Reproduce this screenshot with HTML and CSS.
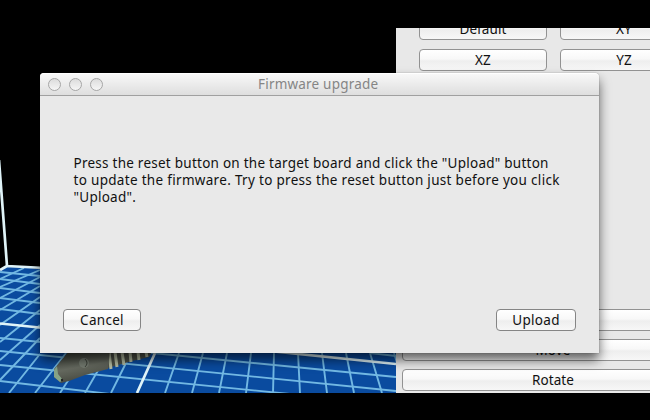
FILE: index.html
```html
<!DOCTYPE html>
<html lang="en">
<head>
<meta charset="utf-8">
<title>Firmware upgrade</title>
<link rel="stylesheet" href="styles.css">
</head>
<body>
<main class="app">
  <svg class="scene" viewBox="0 0 396 365" width="396" height="365" aria-hidden="true">
    <defs>
      <linearGradient id="skin" x1="0" y1="0" x2="0.3" y2="1">
        <stop offset="0" stop-color="#34382f"/><stop offset=".6" stop-color="#666a60"/><stop offset="1" stop-color="#45483f"/>
      </linearGradient>
    </defs>
    <g transform="translate(0 -28)">
      <path fill="#0a4b9f" d="M0 270L7 266L396 300V393H0Z"/>
      <g class="grid">
        <path d="M0 272L40 276M0 279L40 284M0 288L40 293M0 298L40 303M0 309L40 314M0 338L396 377M0 351L396 391M0 365L300 395M0 381L110 394M370 353L396 356"/>
        <path d="M24 268L0 279M40 270L0 287M40 277L0 298M40 286L0 310M40 297L0 325M40 310L0 342M40 325L0 360M40 338L0 380M40 354L9 393M66 353L35 393M86 353L60 393M108 353L85 393M131 353L111 393M179 353L165 393M203 353L192 393M227 353L219 393M251 353L246 393M274 353L273 393M298 353L300 393M322 353L327 393M346 353L354 393M370 353L382 393M394 353L398 366"/>
      </g>
      <path class="edge" d="M-1 160L7 266L45 268M7 266L0 270M0 323.500L396 364M155 353L137 393"/>
      <path fill="#4c5047" d="M106 350H153L149 357L132 361L108 368Z"/>
      <path class="stripe" d="M109 352L111 369M115 352L117 367M122 352L124 365M130 352L131 362M138 352L139 360M146 352L147 357"/>
      <path fill="url(#skin)" d="M70 350L59 363L54 369L54 377L61 383L69 381L85 375L108 369L110 350Z"/>
      <path fill="#87a386" d="M57 366L54 370L54 377L60 382L63 380L58 374Z"/>
      <ellipse cx="84" cy="363" rx="5" ry="5" fill="#747b70"/>
      <path d="M85 359Q89 363 85 367" fill="none" stroke="#3b4038"/>
      <circle cx="62" cy="380" r="1.200" fill="#222"/>
    </g>
  </svg>
  <aside class="panel">
    <div class="views">
      <div class="btn">Default</div><div class="btn">XY</div>
      <div class="btn">XZ</div><div class="btn">YZ</div>
    </div>
    <div class="tools">
      <div class="btn"></div>
      <div class="btn">Move</div>
      <div class="btn">Rotate</div>
    </div>
  </aside>
</main>
<section class="dialog">
  <header class="titlebar">
    <div class="lights"><i></i><i></i><i></i></div>
    <h1 class="title">Firmware upgrade</h1>
  </header>
  <p class="message">
    <span class="line first">Press the reset button on the target board and click the "Upload" button</span>
    <span class="line second">to update the firmware. Try to press the reset button just before you click</span>
    <span class="line last">"Upload".</span>
  </p>
  <footer class="actions">
    <button class="btn cancel">Cancel</button>
    <button class="btn upload">Upload</button>
  </footer>
</section>
</body>
</html>
```

FILE: styles.css
```css
* { box-sizing: border-box; }
body {
  margin: 0;
  width: 650px;
  height: 420px;
  padding-top: 28px;
  overflow: hidden;
  background: #000;
  color: #111;
  font: 13.5px/17px "Noto Sans", "Open Sans", sans-serif;
}
.app { display: flex; height: 365px; overflow: hidden; }
.scene { flex: none; display: block; }
.grid { fill: none; stroke: #72b8e3; stroke-width: 1.9; }
.edge { fill: none; stroke: #dff3f8; stroke-width: 2.7; }
.stripe { fill: none; stroke: #b5bda3; stroke-width: 3; }
.panel {
  flex: none;
  width: 308px;
  display: flex;
  flex-direction: column;
  justify-content: space-between;
  background: #e8e8e8;
}
.views {
  display: grid;
  grid-template-columns: 128px 128px;
  gap: 9px 13px;
  margin: -10px 0 0 23px;
}
.tools { display: grid; gap: 8px; margin: 0 0 2px 6px; }
.btn {
  height: 22px;
  padding: 0;
  border: 1px solid #929292;
  border-radius: 4px;
  background: linear-gradient(#fff 0%, #f8f8f8 45%, #eeeeee 55%, #f7f7f7 100%);
  color: #111;
  font: 13.5px/20px "Noto Sans", "Open Sans", sans-serif;
  letter-spacing: .1px;
  text-align: center;
}
.dialog {
  position: absolute;
  left: 40px;
  top: 73px;
  width: 559px;
  height: 280px;
  display: flex;
  flex-direction: column;
  border-radius: 4px 4px 0 0;
  background: #e9e9e9;
  box-shadow: 0 0 1px rgba(0,0,0,.6), 0 7px 12px rgba(0,0,0,.6);
}
.titlebar {
  display: flex;
  align-items: center;
  height: 23px;
  padding-left: 8px;
  border-bottom: 1px solid #a0a0a0;
  border-top: 1px solid #fff;
  border-radius: 4px 4px 0 0;
  background: linear-gradient(#f8f8f8, #dedede);
}
.lights { display: flex; gap: 8px; }
.lights i {
  width: 13px;
  height: 13px;
  border: 1.500px solid #a6a6a6;
  border-radius: 50%;
  background: linear-gradient(#dcdcdc, #f6f6f6);
}
.title {
  margin: 0 0 0 155px;
  color: #858585;
  font-size: 13.5px;
  font-weight: 400;
  letter-spacing: .2px;
  white-space: nowrap;
}
.message { margin: 59px 0 0 33.5px; }
.line { display: block; white-space: nowrap; letter-spacing: .25px; }
.second { letter-spacing: .31px; }
.actions {
  display: flex;
  justify-content: space-between;
  margin: auto 23px 22px;
}
.actions .btn { border-color: #858585; letter-spacing: .3px; }
.cancel { width: 78px; }
.upload { width: 80px; }
```
